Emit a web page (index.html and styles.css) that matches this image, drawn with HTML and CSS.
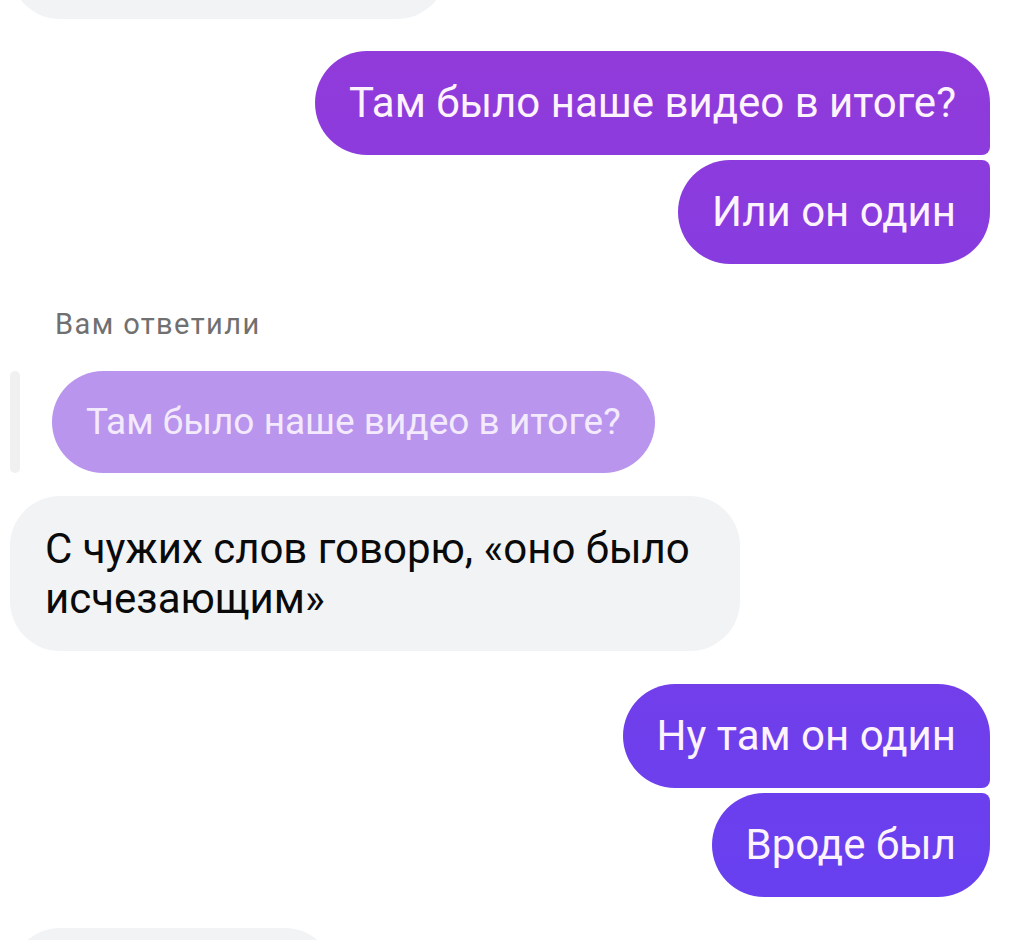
FILE: index.html
```html
<!DOCTYPE html>
<html lang="ru">
  <head>
    <meta charset="UTF-8" />
    <meta name="viewport" content="width=device-width, initial-scale=1.0" />
    <title>Чат</title>
    <link rel="stylesheet" href="styles.css">
  </head>
  <body>
    <div class="chat">
      <!-- предыдущее сообщение, обрезано сверху -->
      <div class="msg in cut-top">&nbsp;</div>

      <div class="group out">
        <div class="msg out first">Там было наше видео в итоге?</div>
        <div class="msg out last">Или он один</div>
      </div>

      <div class="reply-label">Вам ответили</div>
      <div class="reply">
        <div class="reply-bar"></div>
        <div class="reply-quote">Там было наше видео в итоге?</div>
      </div>
      <div class="msg in">С чужих слов говорю, «оно было исчезающим»</div>

      <div class="group out after-in">
        <div class="msg out first">Ну там он один</div>
        <div class="msg out last">Вроде был</div>
      </div>

      <!-- следующее сообщение, обрезано снизу -->
      <div class="msg in cut-bottom">&nbsp;</div>
    </div>
  </body>
</html>
```

FILE: styles.css
```css
/* базовая страница */
body {
  margin: 0;
  background: #fff;
  font-family: 'Roboto', 'Noto Sans', sans-serif;
  color: #000;
  overflow: hidden;
  height: 940px;
}

.chat {
  display: flex;
  flex-direction: column;
  padding: 0 20px 0 10px;
  height: 940px;
  overflow: hidden;
}

/* пузыри */
.msg {
  width: fit-content;
  box-sizing: border-box;
  padding: 27px 34px;
  font-size: 42px;
  line-height: 50px;
  flex-shrink: 0;
}

.msg.in {
  background: #f1f3f5;
  color: #0a0a0a;
  border-radius: 50px;
  max-width: 730px;
  padding: 28px 34px 27px 35px;
}

.msg.out {
  align-self: flex-end;
  color: #fdf3fc;
  background: linear-gradient(180deg, #943ad9 0%, #6540f1 100%);
  background-attachment: fixed;
}

.msg.out.first {
  border-radius: 52px 52px 8px 52px;
}

.msg.out.last {
  border-radius: 52px 8px 52px 52px;
}

.group {
  display: flex;
  flex-direction: column;
  gap: 5px;
  flex-shrink: 0;
}

.group.after-in {
  margin-top: 33px;
}

.cut-top {
  width: 437px;
  margin-top: -86px;
  margin-bottom: 32px;
}

.cut-bottom {
  width: 325px;
  margin-top: 31px;
  padding-left: 0;
  padding-right: 0;
}

/* ответ */
.reply-label {
  margin: 43px 0 0 45px;
  font-size: 29px;
  line-height: 34px;
  letter-spacing: 1.4px;
  color: #707070;
}

.reply {
  display: flex;
  align-items: stretch;
  gap: 32px;
  margin-top: 30px;
  margin-bottom: 23px;
  flex-shrink: 0;
}

.reply-bar {
  width: 10px;
  border-radius: 5px;
  background: #f0f0f0;
}

.reply-quote {
  background: #b995ee;
  color: #f4eafd;
  border-radius: 51px;
  padding: 28px 34px;
  font-size: 37px;
  line-height: 46px;
}
```
